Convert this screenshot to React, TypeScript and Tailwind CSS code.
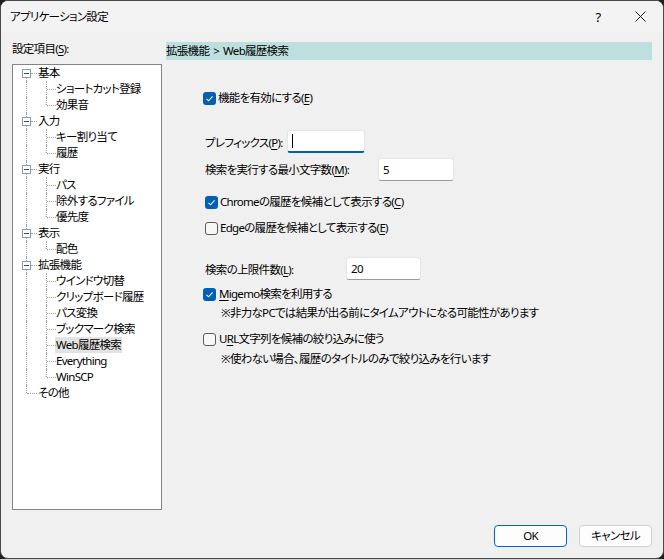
import React from "react";

const FONT =
  "font-['Noto_Sans','Noto_Sans_CJK_JP',sans-serif] [font-feature-settings:'palt'] text-[11.5px] tracking-[-0.7px] text-black";

function U({ children }: { children: React.ReactNode }) {
  return <span className="underline underline-offset-[2px] decoration-[1px]">{children}</span>;
}

function Checkbox({ checked }: { checked: boolean }) {
  if (checked) {
    return (
      <div className="w-[13px] h-[13px] rounded-[3px] bg-[#005fb8] flex items-center justify-center shrink-0">
        <svg width="9" height="9" viewBox="0 0 9 9">
          <path d="M1.5 4.8 L3.6 6.8 L7.6 2.4" fill="none" stroke="white" strokeWidth="1.1" />
        </svg>
      </div>
    );
  }
  return <div className="w-[13px] h-[13px] rounded-[3px] border border-[#5a5a5a] bg-[#f7f7f7] shrink-0" />;
}

type Row =
  | { kind: "root"; label: string; first?: boolean; last?: boolean; box: boolean }
  | { kind: "child"; label: React.ReactNode; lastChild?: boolean; selected?: boolean };

const rows: Row[] = [
  { kind: "root", label: "基本", first: true, box: true },
  { kind: "child", label: "ショートカット登録" },
  { kind: "child", label: "効果音", lastChild: true },
  { kind: "root", label: "入力", box: true },
  { kind: "child", label: "キー割り当て" },
  { kind: "child", label: "履歴", lastChild: true },
  { kind: "root", label: "実行", box: true },
  { kind: "child", label: "パス" },
  { kind: "child", label: "除外するファイル" },
  { kind: "child", label: "優先度", lastChild: true },
  { kind: "root", label: "表示", box: true },
  { kind: "child", label: "配色", lastChild: true },
  { kind: "root", label: "拡張機能", box: true },
  { kind: "child", label: "ウインドウ切替" },
  { kind: "child", label: "クリップボード履歴" },
  { kind: "child", label: "パス変換" },
  { kind: "child", label: "ブックマーク検索" },
  { kind: "child", label: "Web履歴検索", selected: true },
  { kind: "child", label: "Everything" },
  { kind: "child", label: "WinSCP", lastChild: true },
  { kind: "root", label: "その他", last: true, box: false },
];

const VL = "absolute w-0 border-l border-dotted border-[#a0a0a0]";
const HL = "absolute h-0 border-t border-dotted border-[#a0a0a0]";

function TreeRow({ row }: { row: Row }) {
  if (row.kind === "root") {
    return (
      <div className="flex h-[16px] items-center">
        <div className="relative w-[24px] h-[16px] shrink-0">
          {row.box ? (
            <>
              {!row.first && <div className={`${VL} left-[13px] top-0 h-[4px]`} />}
              <div className={`${VL} left-[13px] top-[13px] h-[3px]`} />
              <div className="absolute left-[9px] top-[4px] w-[9px] h-[9px] border border-[#8e9aa8] bg-white flex items-center justify-center">
                <div className="w-[5px] h-[1px] bg-[#2e4f8f]" />
              </div>
              <div className={`${HL} left-[18px] top-[8px] w-[6px]`} />
            </>
          ) : (
            <>
              <div className={`${VL} left-[13px] top-0 h-[8px]`} />
              <div className={`${HL} left-[14px] top-[8px] w-[10px]`} />
            </>
          )}
        </div>
        <span className="pl-[1px] leading-[16px] whitespace-nowrap">{row.label}</span>
      </div>
    );
  }
  return (
    <div className="flex h-[16px] items-center">
      <div className="relative w-[24px] h-[16px] shrink-0">
        <div className={`${VL} left-[13px] top-0 h-[16px]`} />
      </div>
      <div className="relative w-[19px] h-[16px] shrink-0">
        <div className={`${VL} left-[9px] top-0 ${row.lastChild ? "h-[8px]" : "h-[16px]"}`} />
        <div className={`${HL} left-[10px] top-[8px] w-[9px]`} />
      </div>
      <span
        className={`leading-[16px] whitespace-nowrap px-[1px] -ml-[1px] ${row.selected ? "bg-[#e3e3e3]" : ""}`}
      >
        {row.label}
      </span>
    </div>
  );
}

function TextInput({
  value,
  width,
  focused,
}: {
  value?: string;
  width: string;
  focused?: boolean;
}) {
  return (
    <div
      className={`${width} h-[23px] bg-white rounded-[3px] border border-[#e6e6e6] ${
        focused ? "border-b-2 border-b-[#005fb8]" : "border-b-[#9a9a9a]"
      } flex items-center pl-[4px] shrink-0`}
    >
      {focused ? <div className="w-[1px] h-[14px] bg-black" /> : <span className="leading-[14px]">{value}</span>}
    </div>
  );
}

export default function App() {
  return (
    <div className={`w-[664px] h-[559px] bg-[#1e1e1e] ${FONT}`}>
      <div className="w-full h-full rounded-[8px] border border-[#4a4a4a] bg-[#f0f0f0] overflow-hidden flex flex-col">
        {/* title bar */}
        <div className="h-[31px] bg-[#f3f3f3] flex items-center shrink-0">
          <span className="pl-[9px] leading-[14px] whitespace-nowrap">アプリケーション設定</span>
          <div className="flex-1" />
          <span className="w-[14px] text-center text-[13px] leading-[14px] mr-[30px]">?</span>
          <svg width="11" height="11" viewBox="0 0 11 11" className="mr-[17px]">
            <path d="M0.5 0.5 L10.5 10.5 M10.5 0.5 L0.5 10.5" stroke="#1a1a1a" strokeWidth="1" />
          </svg>
        </div>

        {/* body */}
        <div className="flex-1 flex flex-col">
          <div className="flex pt-[10px] pl-[11px]">
            {/* left column */}
            <div className="w-[150px] flex flex-col shrink-0">
              <div className="h-[22px] leading-[13px] whitespace-nowrap">
                設定項目(<U>S</U>):
              </div>
              <div className="h-[446px] bg-white border border-[#848484]">
                {rows.map((r, i) => (
                  <TreeRow key={i} row={r} />
                ))}
              </div>
            </div>

            {/* right column */}
            <div className="ml-[4px] w-[486px] flex flex-col whitespace-nowrap">
              <div className="h-[18px] bg-[#bde0de] flex items-center leading-[14px]">
                <span>拡張機能</span>
                <span className="px-[4px]">&gt;</span>
                <span>Web履歴検索</span>
              </div>

              <div className="flex flex-col pl-[37px]">
                <div className="mt-[30px] h-[16px] flex items-center gap-[2px]">
                  <Checkbox checked />
                  <span className="leading-[14px]">
                    機能を有効にする(<U>E</U>)
                  </span>
                </div>

                <div className="mt-[24px] flex items-center pl-[2px]">
                  <span className="w-[82px] leading-[14px] pt-[2px] shrink-0">
                    プレフィックス(<U>P</U>):
                  </span>
                  <TextInput width="w-[78px]" focused />
                </div>

                <div className="mt-[5px] flex items-center pl-[2px]">
                  <span className="w-[173px] leading-[14px] shrink-0">
                    検索を実行する最小文字数(<U>M</U>):
                  </span>
                  <TextInput width="w-[76px]" value="5" />
                </div>

                <div className="mt-[13px] h-[16px] flex items-center gap-[2px] pl-[2px]">
                  <Checkbox checked />
                  <span className="leading-[14px]">
                    Chromeの履歴を候補として表示する(<U>C</U>)
                  </span>
                </div>

                <div className="mt-[10px] h-[16px] flex items-center gap-[2px] pl-[2px]">
                  <Checkbox checked={false} />
                  <span className="leading-[14px]">
                    Edgeの履歴を候補として表示する(<U>E</U>)
                  </span>
                </div>

                <div className="mt-[21px] flex items-center pl-[2px]">
                  <span className="w-[141px] leading-[14px] pt-[2px] shrink-0">
                    検索の上限件数(<U>L</U>):
                  </span>
                  <TextInput width="w-[75px]" value="20" />
                </div>

                <div className="mt-[6px] h-[16px] flex items-center gap-[3px]">
                  <Checkbox checked />
                  <span className="leading-[14px]">
                    <U>M</U>igemo検索を利用する
                  </span>
                </div>

                <div className="mt-[3px] h-[16px] flex items-center pl-[18px] leading-[14px]">
                  ※非力なPCでは結果が出る前にタイムアウトになる可能性があります
                </div>

                <div className="mt-[10px] h-[16px] flex items-center gap-[3px]">
                  <Checkbox checked={false} />
                  <span className="leading-[14px]">
                    U<U>R</U>L文字列を候補の絞り込みに使う
                  </span>
                </div>

                <div className="mt-[4px] h-[16px] flex items-center pl-[18px] leading-[14px]">
                  ※使わない場合、履歴のタイトルのみで絞り込みを行います
                </div>
              </div>
            </div>
          </div>

          {/* footer */}
          <div className="flex justify-end gap-[12px] pr-[11px] pt-[15px]">
            <button className="w-[73px] h-[22px] rounded-[4px] border border-[#0067c0] bg-[#fdfdfd] leading-[14px]">
              OK
            </button>
            <button className="w-[73px] h-[22px] rounded-[4px] border border-[#d0d0d0] bg-[#fdfdfd] leading-[14px]">
              キャンセル
            </button>
          </div>
        </div>
      </div>
    </div>
  );
}
